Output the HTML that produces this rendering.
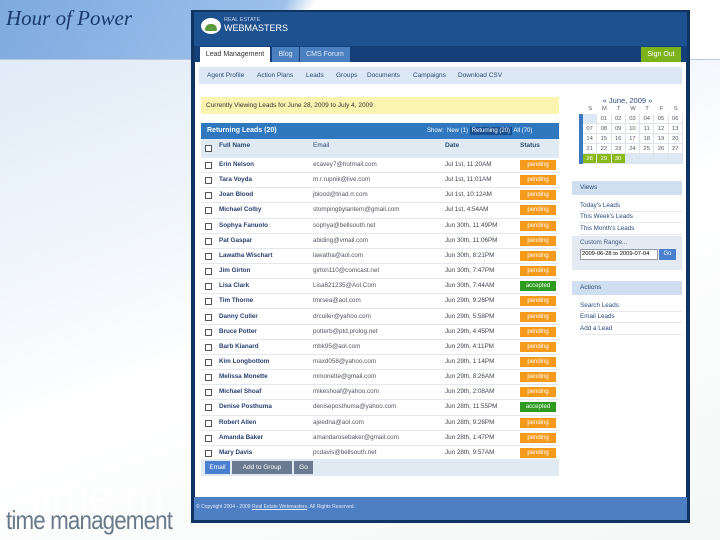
<!DOCTYPE html>
<html><head><meta charset="utf-8"><style>
*{margin:0;padding:0;box-sizing:border-box}
body{width:720px;height:540px;overflow:hidden;position:relative;font-family:"Liberation Sans",sans-serif;background:linear-gradient(160deg,#dce9f6 0%,#eef4fb 30%,#fff 55%,#f3f8f6 100%)}
.a{position:absolute}
#top{left:0;top:0;width:720px;height:60px;background:linear-gradient(120deg,#7eaae0 0%,#9cc0ea 38%,#fff 42%,#fff 100%);border-bottom:1px solid #b8c8d8}
#title{left:6px;top:6px;font-family:"Liberation Serif",serif;font-style:italic;font-size:21px;color:#1a3a6a}
#tm{left:6px;top:505px;font-size:26px;color:#6a7a8a;letter-spacing:-1px;transform:scaleX(.86);transform-origin:left}
#tmbig{left:30px;top:470px;font-size:48px;color:#fff;opacity:.7;letter-spacing:-2px}
#frame{left:191px;top:10px;width:499px;height:513px;background:#0f3460}
#hdr{left:194px;top:12px;width:493px;height:34px;background:#1e5190}
#tabs{left:194px;top:46px;width:493px;height:17px;background:#143f78}
.tab{position:absolute;top:47px;height:16px;font-size:7px;line-height:16px;text-align:center;color:#dfe8f5}
#content{left:195px;top:62px;width:491px;height:436px;background:#fff}
#sub{left:199px;top:67px;width:483px;height:17px;background:#dce8f6;font-size:6.5px;color:#2a4a70;line-height:17px}
#sub span{position:absolute}
#yel{left:201px;top:97px;width:358px;height:17px;background:#fbf3b0;font-size:6.5px;line-height:17px;padding-left:5px;color:#333}
#tb{left:201px;top:123px;width:358px;height:16px;background:#2f78c0;color:#fff;font-size:7px;line-height:16px}
#ch{left:201px;top:139px;width:358px;height:19px;background:#dfeaf3;font-size:6.5px;color:#2a4a70}
.row{position:absolute;left:201px;width:358px;height:15.15px;border-bottom:1px solid #e3e8ee;font-size:6.3px;line-height:14px;background:#fff}
.row span{position:absolute}
.cb{left:4px;top:4px;width:7px;height:7px;border:1px solid #555;background:#fff}
.n{left:18px;font-weight:bold;color:#2a4070}
.e{left:112px;color:#556}
.d{left:244px;color:#445}
.s{left:319px;top:2px;width:36px;height:10px;line-height:10px;text-align:center;color:#fff;font-size:6px;background:#f59a1a}
.s.g{background:#2e9a20}
#bot{left:201px;top:459px;width:358px;height:17px;background:#dfeaf3}
.btn{position:absolute;top:461px;height:13px;line-height:13px;font-size:6.5px;color:#fff;text-align:center}
#foot{left:194px;top:497px;width:493px;height:23px;background:#4f7fc3;font-size:5px;color:#e0e8f5;line-height:20px;padding-left:2px}
.cr{position:absolute;left:583px;width:100px;height:10px;display:flex}
.cr i{font-style:normal;width:14.28px;height:10px;line-height:10px;text-align:center;font-size:5.8px;color:#556;border-right:1px solid #dde4ec;border-bottom:1px solid #dde4ec;background:#fff}
.cr i.x{background:#dde8f4}
.cr i.gr{background:#8ab91c;color:#fff}
.sb{position:absolute;left:572px;width:110px;height:14px;background:#cfdff0;font-size:6.5px;line-height:14px;padding-left:8px;color:#2a4a70}
.lk{position:absolute;left:580px;width:102px;font-size:6.3px;color:#2a4a80;border-bottom:1px solid #e5e9ee;height:12px;line-height:11px}
</style></head><body>
<div class="a" id="top"></div>
<div class="a" id="title">Hour of Power</div>
<div class="a" id="tmbig">time m</div>
<div class="a" id="tm">time management</div>
<div class="a" id="frame"></div>
<div class="a" id="hdr"></div>
<div class="a" style="left:201px;top:18px;width:20px;height:16px;border-radius:50%;background:#fff"></div>
<div class="a" style="left:205px;top:24px;width:12px;height:7px;background:#5a9a3a;border-radius:6px 6px 2px 2px"></div>
<div class="a" style="left:224px;top:17px;font-size:5.5px;color:#c8d8ec;line-height:6px">REAL ESTATE</div>
<div class="a" style="left:224px;top:23px;font-size:9px;color:#fff;line-height:10px">WEBMASTERS</div>
<div class="a" id="tabs"></div>
<div class="tab" style="left:200px;width:70px;background:#fff;color:#333">Lead Management</div>
<div class="tab" style="left:272px;width:27px;background:#4a7fc0">Blog</div>
<div class="tab" style="left:300px;width:50px;background:#4a7fc0">CMS Forum</div>
<div class="tab" style="left:641px;width:40px;background:#7cb21a;color:#fff">Sign Out</div>
<div class="a" id="content"></div>
<div class="a" id="sub"><span style="left:8px">Agent Profile</span><span style="left:58px">Action Plans</span><span style="left:107px">Leads</span><span style="left:137px">Groups</span><span style="left:168px">Documents</span><span style="left:214px">Campaigns</span><span style="left:259px">Download CSV</span></div>
<div class="a" id="yel">Currently Viewing Leads for June 28, 2009 to July 4, 2009</div>
<div class="a" id="tb"><b style="position:absolute;left:6px">Returning Leads (20)</b><span style="position:absolute;left:226px;font-size:6px">Show: &nbsp;New (1) <span style="background:#1a4f90;padding:1px 2px">Returning (20)</span> All (70)</span></div>
<div class="a" id="ch"><span class="a" style="left:4px;top:6px;width:7px;height:7px;border:1px solid #555;background:#fff"></span><b class="a" style="left:18px;top:3px">Full Name</b><b class="a" style="left:112px;top:3px;font-weight:normal">Email</b><b class="a" style="left:244px;top:3px">Date</b><b class="a" style="left:319px;top:3px">Status</b></div>
<div class="row" style="top:158px"><span class="cb"></span><span class="n">Erin Nelson</span><span class="e">ecavey7@hotmail.com</span><span class="d">Jul 1st, 11:20AM</span><span class="s">pending</span></div>
<div class="row" style="top:173.15px"><span class="cb"></span><span class="n">Tara Voyda</span><span class="e">m.r.rupnik@live.com</span><span class="d">Jul 1st, 11:01AM</span><span class="s">pending</span></div>
<div class="row" style="top:188.3px"><span class="cb"></span><span class="n">Joan Blood</span><span class="e">jblood@triad.rr.com</span><span class="d">Jul 1st, 10:12AM</span><span class="s">pending</span></div>
<div class="row" style="top:203.45px"><span class="cb"></span><span class="n">Michael Colby</span><span class="e">stompingbylantern@gmail.com</span><span class="d">Jul 1st, 4:54AM</span><span class="s">pending</span></div>
<div class="row" style="top:218.6px"><span class="cb"></span><span class="n">Sophya Fanuolo</span><span class="e">sophya@bellsouth.net</span><span class="d">Jun 30th, 11:49PM</span><span class="s">pending</span></div>
<div class="row" style="top:233.75px"><span class="cb"></span><span class="n">Pat Gaspar</span><span class="e">abiding@vmail.com</span><span class="d">Jun 30th, 11:06PM</span><span class="s">pending</span></div>
<div class="row" style="top:248.9px"><span class="cb"></span><span class="n">Lawatha Wischart</span><span class="e">lawatha@aol.com</span><span class="d">Jun 30th, 8:21PM</span><span class="s">pending</span></div>
<div class="row" style="top:264.05px"><span class="cb"></span><span class="n">Jim Girton</span><span class="e">girton110@comcast.net</span><span class="d">Jun 30th, 7:47PM</span><span class="s">pending</span></div>
<div class="row" style="top:279.2px"><span class="cb"></span><span class="n">Lisa Clark</span><span class="e">Lisa621235@Aol.Com</span><span class="d">Jun 30th, 7:44AM</span><span class="s g">accepted</span></div>
<div class="row" style="top:294.35px"><span class="cb"></span><span class="n">Tim Thorne</span><span class="e">tmrsea@aol.com</span><span class="d">Jun 29th, 9:26PM</span><span class="s">pending</span></div>
<div class="row" style="top:309.5px"><span class="cb"></span><span class="n">Danny Culler</span><span class="e">drculler@yahoo.com</span><span class="d">Jun 29th, 5:58PM</span><span class="s">pending</span></div>
<div class="row" style="top:324.65px"><span class="cb"></span><span class="n">Bruce Potter</span><span class="e">potterb@ptd.prolog.net</span><span class="d">Jun 29th, 4:45PM</span><span class="s">pending</span></div>
<div class="row" style="top:339.8px"><span class="cb"></span><span class="n">Barb Kianard</span><span class="e">mbk95@aol.com</span><span class="d">Jun 29th, 4:11PM</span><span class="s">pending</span></div>
<div class="row" style="top:354.95px"><span class="cb"></span><span class="n">Kim Longbottom</span><span class="e">maxd058@yahoo.com</span><span class="d">Jun 29th, 1:14PM</span><span class="s">pending</span></div>
<div class="row" style="top:370.1px"><span class="cb"></span><span class="n">Melissa Monette</span><span class="e">mmonette@gmail.com</span><span class="d">Jun 29th, 8:26AM</span><span class="s">pending</span></div>
<div class="row" style="top:385.25px"><span class="cb"></span><span class="n">Michael Shoaf</span><span class="e">mikeshoaf@yahoo.com</span><span class="d">Jun 29th, 2:08AM</span><span class="s">pending</span></div>
<div class="row" style="top:400.4px"><span class="cb"></span><span class="n">Denise Posthuma</span><span class="e">deniseposthuma@yahoo.com</span><span class="d">Jun 28th, 11:55PM</span><span class="s g">accepted</span></div>
<div class="row" style="top:415.55px"><span class="cb"></span><span class="n">Robert Allen</span><span class="e">ajeedna@aol.com</span><span class="d">Jun 28th, 9:26PM</span><span class="s">pending</span></div>
<div class="row" style="top:430.7px"><span class="cb"></span><span class="n">Amanda Baker</span><span class="e">amandarosebaker@gmail.com</span><span class="d">Jun 28th, 1:47PM</span><span class="s">pending</span></div>
<div class="row" style="top:445.85px"><span class="cb"></span><span class="n">Mary Davis</span><span class="e">pcdavis@bellsouth.net</span><span class="d">Jun 28th, 9:57AM</span><span class="s">pending</span></div>
<div class="a" id="bot"></div>
<div class="btn" style="left:205px;width:25px;background:#4a7fd0">Email</div>
<div class="btn" style="left:232px;width:60px;background:#6a7a90">Add to Group</div>
<div class="btn" style="left:294px;width:19px;background:#6a7a90">Go</div>
<!-- calendar -->
<div class="a" style="left:572px;top:96px;width:111px;text-align:center;font-size:7.5px;color:#2a4a80">« June, 2009 »</div>
<div class="cr" style="top:104px"><i style="background:none;border:0">S</i><i style="background:none;border:0">M</i><i style="background:none;border:0">T</i><i style="background:none;border:0">W</i><i style="background:none;border:0">T</i><i style="background:none;border:0">F</i><i style="background:none;border:0">S</i></div>
<div class="a" style="left:579px;top:114px;width:4px;height:50px;background:#3a78c0"></div>
<div class="cr" style="top:114px"><i class="x"></i><i>01</i><i>02</i><i>03</i><i>04</i><i>05</i><i>06</i></div>
<div class="cr" style="top:124px"><i>07</i><i>08</i><i>09</i><i>10</i><i>11</i><i>12</i><i>13</i></div>
<div class="cr" style="top:134px"><i>14</i><i>15</i><i>16</i><i>17</i><i>18</i><i>19</i><i>20</i></div>
<div class="cr" style="top:144px"><i>21</i><i>22</i><i>23</i><i>24</i><i>25</i><i>26</i><i>27</i></div>
<div class="cr" style="top:154px"><i class="gr">28</i><i class="gr">29</i><i class="gr">30</i><i class="x"></i><i class="x"></i><i class="x"></i><i class="x"></i></div>
<div class="sb" style="top:181px">Views</div>
<div class="lk" style="top:200px">Today's Leads</div>
<div class="lk" style="top:211px">This Week's Leads</div>
<div class="lk" style="top:223px">This Month's Leads</div>
<div class="a" style="left:572px;top:236px;width:110px;height:34px;background:#e3eaf1"></div>
<div class="a" style="left:580px;top:239px;font-size:6.3px;color:#3a5a80">Custom Range...</div>
<div class="a" style="left:580px;top:249px;width:78px;height:11px;background:#fff;border:1px solid #99a;font-size:5.8px;line-height:9px;padding-left:1px">2009-06-28 to 2009-07-04</div>
<div class="a" style="left:659px;top:249px;width:17px;height:11px;background:#4a7fd0;color:#fff;font-size:6px;line-height:11px;text-align:center">Go</div>
<div class="sb" style="top:281px">Actions</div>
<div class="lk" style="top:300px">Search Leads</div>
<div class="lk" style="top:311px">Email Leads</div>
<div class="lk" style="top:323px">Add a Lead</div>
<div class="a" id="foot">© Copyright 2004 - 2009 <u>Real Estate Webmasters</u>. All Rights Reserved.</div>
</body></html>
